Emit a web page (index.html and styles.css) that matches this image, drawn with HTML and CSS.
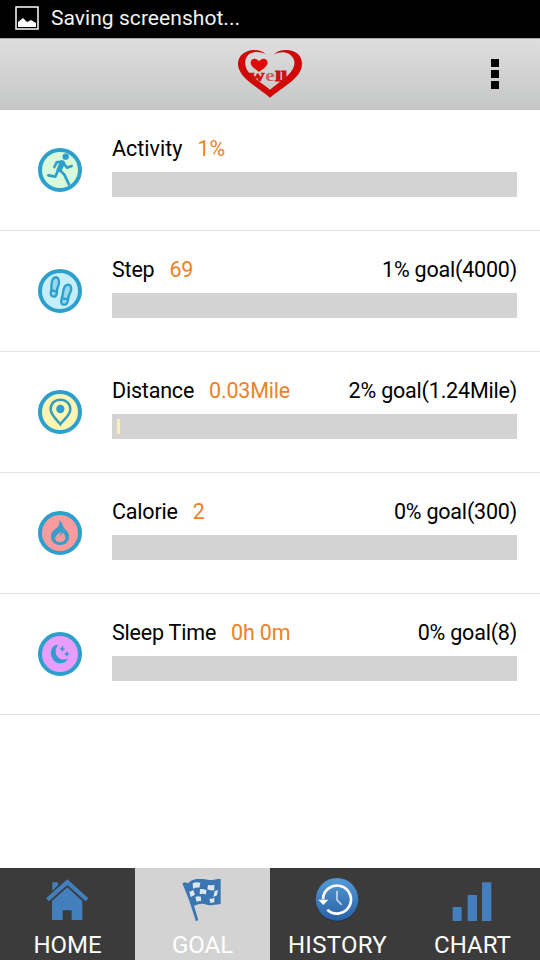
FILE: index.html
```html
<!DOCTYPE html>
<html lang="en">
<head>
<meta charset="utf-8">
<title>Well</title>
<link rel="stylesheet" href="styles.css">
</head>
<body>
<div class="status">
  <svg class="status-icon" viewBox="0 0 24 24"><rect x="1" y="1" width="22" height="22" fill="none" stroke="#fff" stroke-width="1.5"/><path fill="#fff" d="M3 21v-5l5-4 4 4 4-2 5 3v4z"/></svg>
  <span>Saving screenshot...</span>
</div>
<header class="header">
  <svg class="logo" viewBox="24 30 192 144">
    <path fill="#d00808" d="M107 43C95 29 67 27 49 35C29 44 21 62 25 80C32 116 82 141 120 173C158 141 209 116 215 80C219 58 209 42 190 34C169 27 144 30 132 44C151 34 170 35 181 45C197 57 196 75 187 89C173 112 144 128 120 149C96 128 64 112 51 89C43 73 43 54 57 43C70 34 92 34 107 43Z"/>
    <path fill="#df0a0a" d="M87 96C77 87 63 81 62 69C61 55 79 51 87 64C95 51 113 55 113 68C112 81 97 87 87 96Z"/>
    <text class="logo-w" x="58" y="123" textLength="46" lengthAdjust="spacingAndGlyphs">w</text>
    <text class="logo-e" x="106" y="123" textLength="28" lengthAdjust="spacingAndGlyphs">e</text>
    <text class="logo-l" x="136" y="123" textLength="36" lengthAdjust="spacingAndGlyphs">ll</text>
  </svg>
  <div class="more"><i></i><i></i><i></i></div>
</header>
<main class="goals">
  <section class="row">
    <svg class="icon" viewBox="24 24 132 132">
      <circle cx="90" cy="90" r="60" fill="#d8fadb" stroke="#2c9fcc" stroke-width="12"/>
      <circle cx="107" cy="50" r="9.5" fill="#2c9fcc"/>
      <g fill="none" stroke="#2c9fcc" stroke-linecap="round" stroke-linejoin="round"><path stroke-width="16" d="M97 69L88 88"/><path stroke-width="8" d="M95 65L80 67L73 81M100 68L111 83L125 78M84 91L76 110L55 106M90 91L103 104L117 133"/></g>
    </svg>
    <div class="body">
      <div class="line"><span class="name">Activity</span><span class="value">1%</span></div>
      <div class="bar"></div>
    </div>
  </section>
  <section class="row">
    <svg class="icon" viewBox="24 24 132 132">
      <circle cx="90" cy="90" r="60" fill="#c5eefa" stroke="#2c9fcc" stroke-width="12"/>
      <g fill="#96d8ec" stroke="#2c9fcc" stroke-width="7"><path d="M76 49C83 48 88 54 87 66C86 75 81 80 81 90C81 101 78 108 71 107C62 106 61 99 63 90C66 80 63 75 65 65C67 55 70 50 76 49Z"/><path d="M113 71C121 70 125 77 123 88C121 97 116 101 115 111C114 126 109 132 101 131C93 130 92 122 95 114C98 104 98 99 100 89C102 78 106 72 113 71Z"/><path d="M65 88L81 92M97 112L114 115"/></g>
    </svg>
    <div class="body">
      <div class="line"><span class="name">Step</span><span class="value">69</span><span class="target">1% goal(4000)</span></div>
      <div class="bar"></div>
    </div>
  </section>
  <section class="row">
    <svg class="icon" viewBox="24 24 132 132">
      <circle cx="90" cy="90" r="60" fill="#fdf5b1" stroke="#2c9fcc" stroke-width="12"/>
      <path d="M91 127C82 114 62 100 62 82C62 64 74 53 91 53C108 53 121 65 121 82C121 100 100 114 91 127Z" fill="#fff7b2" stroke="#359dbe" stroke-width="7.5"/><circle cx="91" cy="81" r="12.5" fill="#2c9fcc"/>
    </svg>
    <div class="body">
      <div class="line"><span class="name">Distance</span><span class="value">0.03Mile</span><span class="target">2% goal(1.24Mile)</span></div>
      <div class="bar"><div class="fill"></div></div>
    </div>
  </section>
  <section class="row">
    <svg class="icon" viewBox="24 24 132 132">
      <circle cx="90" cy="90" r="60" fill="#fa9c9d" stroke="#2c9fcc" stroke-width="12"/>
      <path fill="#3b9dca" fill-rule="evenodd" d="M88 52C100 61 96 69 104 77C113 85 119 92 117 104C115 118 105 126 91 126C75 126 64 117 63 102C62 91 68 82 77 77C85 71 90 64 88 52ZM92 83C91 91 77 94 76 104C75 112 81 117 90 117C99 117 106 112 106 104C106 97 101 94 98 88C96 94 94 97 88 99C91 94 93 89 92 83Z"/>
    </svg>
    <div class="body">
      <div class="line"><span class="name">Calorie</span><span class="value">2</span><span class="target">0% goal(300)</span></div>
      <div class="bar"></div>
    </div>
  </section>
  <section class="row">
    <svg class="icon" viewBox="24 24 132 132">
      <circle cx="90" cy="90" r="60" fill="#e79efa" stroke="#2c9fcc" stroke-width="12"/>
      <path fill="#3499ce" d="M85 62C69 62 61 76 63 90C65 107 77 118 91 118C102 118 110 112 115 103C105 109 92 108 84 99C74 88 75 73 85 62ZM97 64L100 72L106 75L100 77L97 84L94 77L88 75L94 72ZM111 80L113 87L119 90L113 93L111 99L108 93L102 90L108 87Z"/>
    </svg>
    <div class="body">
      <div class="line"><span class="name">Sleep Time</span><span class="value">0h 0m</span><span class="target">0% goal(8)</span></div>
      <div class="bar"></div>
    </div>
  </section>
</main>
<nav class="tabs">
  <div class="tab">
    <svg class="tab-icon home" viewBox="138 57 126 126"><g fill="#427fbc"><path d="M157 67H174V76L157 93ZM138 115L202 58L265 115L257 124L202 75L147 124Z"/><path d="M156 123L202 82L247 123V180H215V151H188V180H156Z"/></g></svg>
    <span>HOME</span>
  </div>
  <div class="tab active">
    <svg class="tab-icon" viewBox="545 57 126 126"><path fill="#3b75b2" d="M546 70L554 67L563 70C582 51 609 56 625 60C640 62 650 55 661 57V132C640 134 633 138 620 134C607 129 597 130 581 137L594 180L587 184L566 120Z"/><g fill="#dce6ef"><path d="M577 70Q587 65 600 68L597 83Q588 81 578 86ZM623 74Q631 78 642 74V90Q632 93 621 88ZM567 96L579 90L584 104L571 111ZM599 87Q610 86 619 91L616 104Q609 99 598 103ZM643 93L653 90L650 106L639 111ZM585 111Q591 107 602 110V124Q595 122 589 126ZM627 116Q635 117 642 113V127L630 129Z"/></g></svg>
    <span>GOAL</span>
  </div>
  <div class="tab">
    <svg class="tab-icon history" viewBox="135 52 132 135"><defs><linearGradient id="blue" x2="0" y2="1"><stop stop-color="#5699d5"/><stop offset="1" stop-color="#2861a6"/></linearGradient></defs><circle cx="201" cy="121" r="65" fill="#27323f"/><circle cx="201" cy="119" r="64" fill="url(#blue)"/><path d="M159 119A42 42 0 1 1 172 150" fill="none" stroke="#fff" stroke-width="8"/><path fill="#fff" d="M145 120H175L160 136Z"/><path d="M201 93V121L215 135" fill="none" stroke="#e5effa" stroke-width="4"/></svg>
    <span class="history-label">HISTORY</span>
  </div>
  <div class="tab">
    <svg class="tab-icon chart" viewBox="543 59 126 126"><path fill="#437fbd" d="M548 143H575V185H548ZM593 107H621V185H593ZM636 69H664V185H636Z"/></svg>
    <span>CHART</span>
  </div>
</nav>
</body>
</html>
```
FILE: styles.css
```css
* { box-sizing: border-box; }
body {
  margin: 0;
  height: 960px;
  display: flex;
  flex-direction: column;
  overflow: hidden;
  background: #fff;
  color: #000;
  font-family: Roboto, "Liberation Sans", sans-serif;
}
.status {
  height: 38px;
  flex: none;
  display: flex;
  align-items: center;
  gap: 12px;
  padding: 0 15px 2px;
  background: #000;
  color: #f2f2f2;
  font-size: 21px;
  letter-spacing: 0.05px;
}
.status-icon { width: 24px; height: 24px; }
.header {
  height: 72px;
  flex: none;
  display: grid;
  grid-template-columns: 1fr 64px 1fr;
  align-items: center;
  padding-bottom: 2px;
  border-top: 1px solid #aaa;
  background: linear-gradient(#dedede, #c5c6c6);
}
.logo { grid-column: 2; width: 64px; height: 48px; }
.logo text { fill: #cf1111; font-family: "Liberation Serif", serif; font-weight: bold; }
.logo .logo-w { font-size: 50px; stroke: #cf1111; stroke-width: 2px; }
.logo .logo-e { font-size: 48px; fill: #d65c60; }
.logo .logo-l { font-size: 46px; stroke: #cf1111; stroke-width: 3px; }
.more {
  justify-self: end;
  display: grid;
  gap: 3px;
  margin-right: 41px;
}
.more i { width: 8px; height: 8px; background: #050505; }
.goals { flex: 1; }
.row {
  height: 121px;
  display: flex;
  padding: 0 23px 0 38px;
  border-bottom: 1px solid #e2e2e2;
  letter-spacing: -0.2px;
}
.row:first-child { letter-spacing: 0; }
.icon { width: 44px; height: 44px; margin-top: 38px; flex: none; }
.body { flex: 1; margin-left: 30px; padding-top: 24px; }
.line {
  height: 30px;
  display: flex;
  font-size: 21.5px;
  line-height: 30px;
  white-space: nowrap;
}
.value { margin-left: 15px; color: #ed8227; }
.target { margin-left: auto; }
.bar {
  height: 25px;
  margin-top: 8px;
  padding: 5px;
  background: #d3d3d3;
}
.fill { width: 3px; height: 15px; background: #fff0b0; }
.tabs {
  height: 92px;
  flex: none;
  display: grid;
  grid-template-columns: repeat(4, 1fr);
  background: #3b3b3b;
  color: #fff;
}
.tab {
  display: flex;
  flex-direction: column;
  align-items: center;
  padding-top: 11px;
  font-size: 24px;
  line-height: 28px;
}
.tab.active { background: #d3d3d3; }
.tab-icon { width: 42px; height: 42px; margin-bottom: 10px; }
.tab-icon.home { margin-right: 1px; }
.tab-icon.chart { margin-right: 2px; }
.tab-icon.history { width: 44px; height: 45px; margin: -2px 1px 9px 0; }
.history-label { letter-spacing: 0.3px; }
```
